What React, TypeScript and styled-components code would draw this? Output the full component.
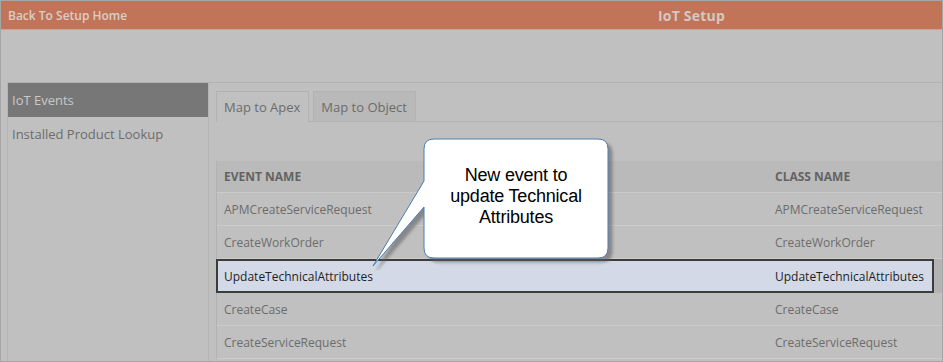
import styled, { createGlobalStyle } from 'styled-components';

const GlobalStyle = createGlobalStyle`
  html, body {
    margin: 0;
    padding: 0;
    background: #c0c0c0;
  }
  * {
    box-sizing: border-box;
  }
`;

const Page = styled.div`
  position: relative;
  width: 943px;
  height: 362px;
  overflow: hidden;
  background: #c0c0c0;
  font-family: 'Open Sans', 'Noto Sans', sans-serif;
  border: 1px solid #a6a6a6;
`;

const Header = styled.div`
  display: grid;
  grid-template-columns: 650px auto 1fr;
  align-items: center;
  height: 29px;
  padding-left: 7px;
  background: #c27458;
  border-bottom: 1px solid #c8a397;
`;

const BackLink = styled.div`
  font-size: 12px;
  font-weight: 600;
  color: #dacdc8;
`;

const Title = styled.div`
  grid-column: 2;
  font-size: 14px;
  font-weight: 700;
  color: #d2c9c5;
  letter-spacing: 0.2px;
`;

const Band = styled.div`
  height: 52px;
`;

const Body = styled.div`
  display: flex;
  height: 280px;
  margin-left: 6px;
  border-top: 1px solid #b2b2b2;
`;

const Sidebar = styled.div`
  display: flex;
  flex-direction: column;
  width: 202px;
  flex-shrink: 0;
  border-left: 1px solid #b4b4b4;
  border-right: 1px solid #b4b4b4;
`;

const NavItem = styled.div<{ $active?: boolean }>`
  display: flex;
  align-items: center;
  height: 34px;
  padding-left: 4px;
  font-size: 13px;
  color: ${(p) => (p.$active ? '#c9c9c9' : '#6c6c6c')};
  background: ${(p) => (p.$active ? '#777777' : 'transparent')};
`;

const Content = styled.div`
  flex: 1;
  display: flex;
  flex-direction: column;
  padding: 8px 0 0 7px;
  min-width: 0;
`;

const Tabs = styled.div`
  display: flex;
  gap: 4px;
  height: 31px;
  border-bottom: 1px solid #b2b2b2;
`;

const Tab = styled.div<{ $active?: boolean }>`
  display: flex;
  align-items: center;
  height: ${(p) => (p.$active ? '31px' : '30px')};
  padding: 0 8px 0 7px;
  font-size: 13px;
  color: #6c6c6c;
  border: 1px solid #b2b2b2;
  border-bottom: none;
  background: ${(p) => (p.$active ? '#c0c0c0' : '#b9b9b9')};
  align-self: flex-start;
`;

const Table = styled.div`
  display: flex;
  flex-direction: column;
  margin-top: 39px;
  border-left: 1px solid #b2b2b2;
`;

const Row = styled.div<{ $head?: boolean; $selected?: boolean }>`
  display: grid;
  grid-template-columns: 551px 1fr;
  align-items: center;
  height: ${(p) => (p.$head ? '32px' : p.$selected ? '34px' : '33px')};
  font-size: 12px;
  font-weight: ${(p) => (p.$head ? 700 : 400)};
  color: ${(p) => (p.$head ? '#636363' : p.$selected ? '#1f1f1f' : '#6c6c6c')};
  background: ${(p) => (p.$head ? '#bababa' : p.$selected ? '#d3d9e6' : 'transparent')};
  border-bottom: 1px solid #cbcbcb;
  ${(p) =>
    p.$selected &&
    `
    grid-template-columns: 550px 1fr;
    border: 2px solid #3c3c3c;
    margin-left: -1px;
    margin-right: 8px;
    box-shadow: 8px 0 0 #b3b3b3;
  `}
`;

const Cell = styled.div<{ $shift?: number }>`
  padding-left: ${(p) => 7 - (p.$shift ?? 0)}px;
  white-space: nowrap;
`;

const Callout = styled.div`
  position: absolute;
  left: 360px;
  top: 130px;
  width: 260px;
  height: 140px;
  pointer-events: none;
`;

const CalloutText = styled.div`
  position: absolute;
  left: 63px;
  top: 8px;
  width: 184px;
  padding-top: 26px;
  text-align: center;
  font-family: 'Liberation Sans', Arial, sans-serif;
  font-size: 18px;
  line-height: 21px;
  letter-spacing: -0.2px;
  color: #000;
`;

const events = [
  'APMCreateServiceRequest',
  'CreateWorkOrder',
  'UpdateTechnicalAttributes',
  'CreateCase',
  'CreateServiceRequest',
];

function BubbleShape() {
  const d =
    'M73 8 H237 Q247 8 247 18 V117 Q247 127 237 127 H73 Q63 127 63 117 V76 L12 135 L63 50 V18 Q63 8 73 8 Z';
  return (
    <svg width="260" height="140" viewBox="0 0 260 140">
      <defs>
        <filter id="bubbleShadow" x="-10%" y="-10%" width="130%" height="130%">
          <feDropShadow dx="4" dy="4" stdDeviation="1.5" floodColor="#5a5a5a" floodOpacity="0.55" />
        </filter>
      </defs>
      <path d={d} fill="#ffffff" stroke="#4a7cb3" strokeWidth="1" filter="url(#bubbleShadow)" />
    </svg>
  );
}

export default function App() {
  return (
    <>
      <GlobalStyle />
      <Page>
        <Header>
          <BackLink>Back To Setup Home</BackLink>
          <Title>IoT Setup</Title>
        </Header>
        <Band />
        <Body>
          <Sidebar>
            <NavItem $active>IoT Events</NavItem>
            <NavItem>Installed Product Lookup</NavItem>
          </Sidebar>
          <Content>
            <Tabs>
              <Tab $active>Map to Apex</Tab>
              <Tab>Map to Object</Tab>
            </Tabs>
            <Table>
              <Row $head>
                <Cell>EVENT NAME</Cell>
                <Cell>CLASS NAME</Cell>
              </Row>
              {events.map((name) => {
                const selected = name === 'UpdateTechnicalAttributes';
                return (
                  <Row key={name} $selected={selected}>
                    <Cell $shift={selected ? 1 : 0}>{name}</Cell>
                    <Cell>{name}</Cell>
                  </Row>
                );
              })}
            </Table>
          </Content>
        </Body>
        <Callout>
          <BubbleShape />
          <CalloutText>
            New event to
            <br />
            update Technical
            <br />
            Attributes
          </CalloutText>
        </Callout>
      </Page>
    </>
  );
}
